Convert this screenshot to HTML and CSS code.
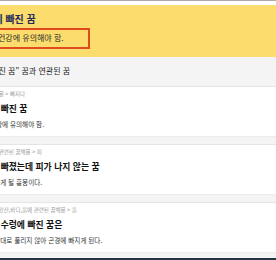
FILE: index.html
```
<!DOCTYPE html>
<html lang="ko">
<head>
  <meta charset="UTF-8">
  <title>수렁에 빠진 꿈</title>
  <link rel="stylesheet" href="styles.css">
</head>
<body>

<div class="topbar"></div>

<section class="hero">
  <h1>수렁에 빠진 꿈</h1>
  <p class="summary">특히 건강에 유의해야 함.</p>
</section>

<h2 class="related">"수렁에 빠진 꿈" 꿈과 연관된 꿈</h2>

<ul class="dream-list">
  <li class="dream">
    <p class="crumb">몸 꿈해몽 &gt; 빠지다</p>
    <h3>늪에 빠진 꿈</h3>
    <p class="desc">몸 건강에 유의해야 함.</p>
  </li>
  <li class="dream">
    <p class="crumb">신체에 관련된 꿈해몽 &gt; 피</p>
    <h3>이가 빠졌는데 피가 나지 않는 꿈</h3>
    <p class="desc">곤란하게 될 흉몽이다.</p>
  </li>
  <li class="dream">
    <p class="crumb">대자연,강산,바다,흙에 관련된 꿈해몽 &gt; 흙</p>
    <h3>깊은 수렁에 빠진 꿈은</h3>
    <p class="desc">생각한대로 풀리지 않아 곤경에 빠지게 된다.</p>
  </li>
</ul>

<div class="footer-bar"></div>

</body>
</html>
```

FILE: styles.css
```
body {
  margin: 0;
  font-family: "Noto Sans CJK KR", "Noto Sans", sans-serif;
  background: #f4f4f4;
  color: #333;
  overflow: hidden;
}

.topbar {
  height: 4px;
  border-top: 1px solid #aaa;
  background: #fff;
}

.hero {
  background: #fcdc6c;
  padding: 7px 0 8px;
  margin-left: -25px;
}

.hero h1 {
  margin: 0 0 2px;
  font-size: 10px;
  line-height: 14px;
  color: #1f2b5b;
}

.summary {
  width: fit-content;
  margin: 0;
  padding: 2px 24px 4px 4px;
  font-size: 8px;
  line-height: 11px;
  color: #2a2a2a;
  border: 2px solid #e04a1f;
}

.related {
  margin: 0 0 0 -37px;
  padding: 8px 0 9px;
  font-size: 8px;
  line-height: 12px;
  font-weight: normal;
  color: #222;
}

.dream-list {
  list-style: none;
  margin: 0;
  padding: 0;
}

.dream {
  background: #fff;
  border-top: 1px solid #e4e4e4;
  border-bottom: 1px solid #ececec;
  padding: 4px 0 7px;
  margin-left: -18px;
}

.dream + .dream {
  margin-top: 7px;
}

.crumb {
  margin: 0;
  font-size: 5.5px;
  line-height: 7px;
  color: #999;
}

.dream h3 {
  margin: 5px 0 0;
  font-size: 8.8px;
  line-height: 12px;
  color: #111;
}

.desc {
  margin: 5px 0 0;
  font-size: 6.6px;
  line-height: 9px;
  color: #333;
}

.footer-bar {
  margin-top: 5px;
  height: 2px;
  background: #243447;
}
```
